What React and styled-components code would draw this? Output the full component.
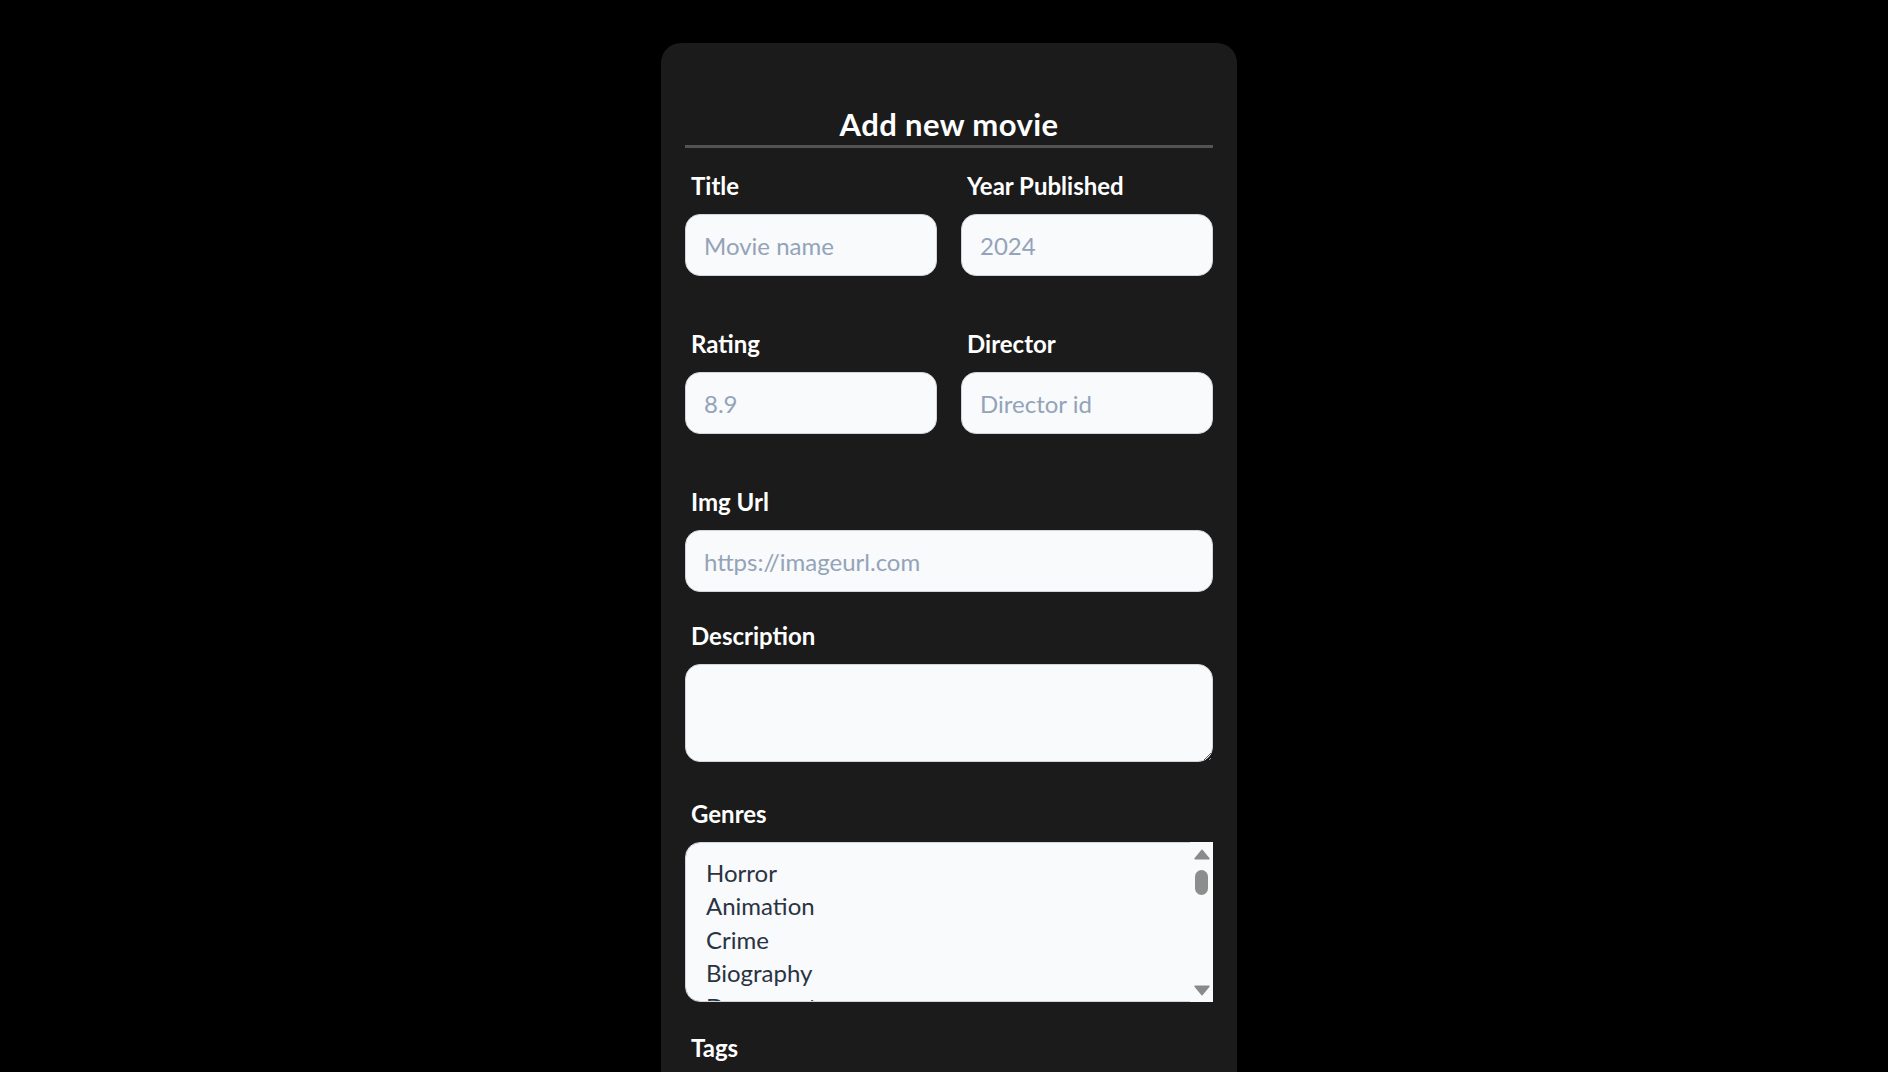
import React from "react";
import styled, { createGlobalStyle } from "styled-components";

const GlobalStyle = createGlobalStyle`
  html, body {
    margin: 0;
    padding: 0;
    background: #000;
    font-family: "Lato", "Noto Sans", sans-serif;
  }
  * { box-sizing: border-box; }
`;

const Page = styled.main`
  display: flex;
  justify-content: center;
  padding-top: 43px;
  padding-left: 10px;
  min-height: 100vh;
  background: #000;
`;

const Card = styled.section`
  width: 576px;
  background: #1b1b1b;
  border-radius: 20px;
  padding: 61px 24px 40px;
`;

const Heading = styled.h2`
  margin: 0;
  padding-bottom: 1px;
  font-size: 31px;
  font-weight: 700;
  letter-spacing: 0.4px;
  line-height: 40px;
  text-align: center;
  color: #fff;
  border-bottom: 3px solid #535353;
`;

const Form = styled.form`
  display: flex;
  flex-direction: column;
  gap: 28px;
  margin-top: 22px;
`;

const Row = styled.div`
  display: grid;
  grid-template-columns: 1fr 1fr;
  column-gap: 24px;
  margin-bottom: 24px;
`;

const Field = styled.div`
  display: flex;
  flex-direction: column;
  margin-bottom: ${(p) => p.$extra || 0}px;
`;

const Label = styled.label`
  font-size: 24px;
  font-weight: 700;
  line-height: 32px;
  color: #fff;
  padding-left: 6px;
  margin-bottom: 12px;
`;

const fieldBase = `
  width: 100%;
  border: 1px solid #d1d5db;
  border-radius: 15px;
  background: #f8fafc;
  font-family: "Lato", "Noto Sans", sans-serif;
  font-size: 24px;
  color: #2a3342;
  outline: none;
  &::placeholder { color: #94a3b8; }
`;

const Input = styled.input`
  ${fieldBase}
  height: 62px;
  padding: 0 18px;
`;

const TextArea = styled.textarea`
  ${fieldBase}
  display: block;
  height: 98px;
  padding: 12px 18px;
  resize: vertical;
`;

const SelectWrap = styled.div`
  position: relative;
  height: 160px;
`;

const GenreSelect = styled.select`
  ${fieldBase}
  display: block;
  height: 160px;
  padding: 13px 18px;
  overflow-y: auto;
  scrollbar-width: none;

  option {
    padding: 1.5px 2px 3px;
    color: #2a3342;
  }
`;

const FakeScrollbar = styled.div`
  position: absolute;
  top: 0;
  right: 0;
  bottom: 0;
  width: 23px;
  display: flex;
  flex-direction: column;
  align-items: center;
  padding: 7px 0 6px;
  background: #f9fafb;
  pointer-events: none;
`;

const Thumb = styled.div`
  width: 13px;
  height: 25px;
  margin-top: 10px;
  border-radius: 7px;
  background: #8d8d8d;
`;

const Spacer = styled.div`
  flex: 1;
`;

const Arrow = ({ down }) => (
  <svg width="16" height="11" viewBox="0 0 16 11" style={{ display: "block" }}>
    <path
      d={down ? "M1 1.2 L15 1.2 L8 9.8 Z" : "M8 1.2 L15 9.8 L1 9.8 Z"}
      fill="#8a8a8a"
      stroke="#8a8a8a"
      strokeWidth="1.4"
      strokeLinejoin="round"
    />
  </svg>
);

const SubmitButton = styled.button`
  height: 56px;
  border: none;
  border-radius: 15px;
  background: #f8fafc;
  color: #1b1b1b;
  font-family: "Lato", "Noto Sans", sans-serif;
  font-size: 24px;
  font-weight: 700;
  cursor: pointer;
`;

const genres = [
  "Horror",
  "Animation",
  "Crime",
  "Biography",
  "Documentary",
  "Drama",
  "Comedy",
  "Action",
  "Adventure",
  "Fantasy",
  "Sci-Fi",
  "Thriller",
  "Mystery",
  "Romance",
  "Family",
  "Musical",
  "War",
  "Western",
  "History",
  "Sport",
  "Music",
  "Film-Noir",
];

export default function App() {
  return (
    <>
      <GlobalStyle />
      <Page>
        <Card>
          <Heading>Add new movie</Heading>
          <Form onSubmit={(e) => e.preventDefault()}>
            <Row>
              <Field>
                <Label htmlFor="title">Title</Label>
                <Input id="title" placeholder="Movie name" />
              </Field>
              <Field>
                <Label htmlFor="year">Year Published</Label>
                <Input id="year" placeholder="2024" />
              </Field>
            </Row>
            <Row>
              <Field>
                <Label htmlFor="rating">Rating</Label>
                <Input id="rating" placeholder="8.9" />
              </Field>
              <Field>
                <Label htmlFor="director">Director</Label>
                <Input id="director" placeholder="Director id" />
              </Field>
            </Row>
            <Field>
              <Label htmlFor="img">Img Url</Label>
              <Input id="img" placeholder="https://imageurl.com" />
            </Field>
            <Field $extra={8}>
              <Label htmlFor="desc">Description</Label>
              <TextArea id="desc" />
            </Field>
            <Field $extra={2}>
              <Label htmlFor="genres">Genres</Label>
              <SelectWrap>
                <GenreSelect id="genres" multiple>
                  {genres.map((g) => (
                    <option key={g} value={g}>
                      {g}
                    </option>
                  ))}
                </GenreSelect>
                <FakeScrollbar aria-hidden="true">
                  <Arrow />
                  <Thumb />
                  <Spacer />
                  <Arrow down />
                </FakeScrollbar>
              </SelectWrap>
            </Field>
            <Field>
              <Label htmlFor="tags">Tags</Label>
              <Input id="tags" placeholder="drama, classic" />
            </Field>
            <SubmitButton type="submit">Add movie</SubmitButton>
          </Form>
        </Card>
      </Page>
    </>
  );
}
